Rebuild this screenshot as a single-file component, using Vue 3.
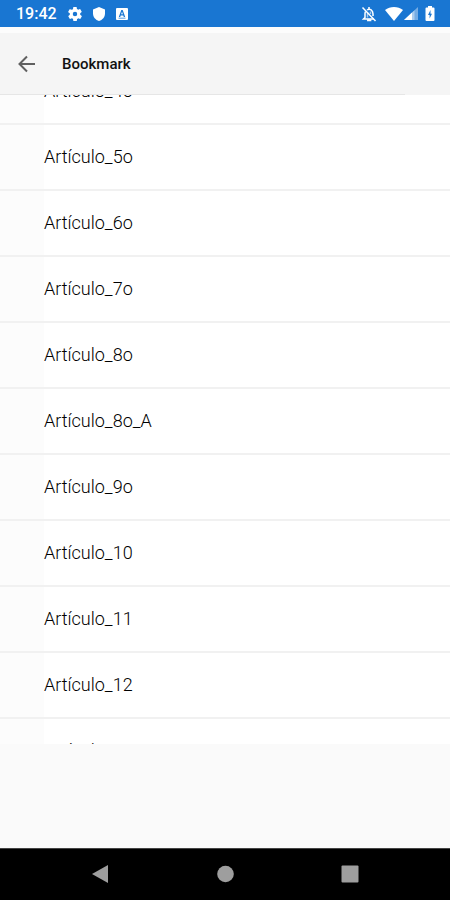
<template>
  <div class="screen">
    <header class="status">
      <span class="time">19:42</span>
      <svg class="icon gear" viewBox="2 2 20 20">
        <path d="M19.400 13a7.500 7.500 0 0 0 0-2l2.100-1.700a.5.5 0 0 0 .1-.6l-2-3.500a.5.5 0 0 0-.6-.2l-2.500 1a7.300 7.300 0 0 0-1.700-1L14.400 2.400A.5.5 0 0 0 14 2h-4a.5.5 0 0 0-.5.400L9.100 5.100a7.700 7.700 0 0 0-1.700 1l-2.500-1a.5.5 0 0 0-.6.2l-2 3.500a.5.5 0 0 0 .1.600L4.600 11a7.900 7.900 0 0 0 0 2l-2.100 1.700a.5.5 0 0 0-.1.600l2 3.500c.1.200.4.300.6.200l2.500-1c.5.400 1.100.7 1.700 1l.4 2.600c0 .2.200.4.500.4h4c.2 0 .4-.2.500-.4l.4-2.600a7.300 7.300 0 0 0 1.700-1l2.500 1c.2.100.5 0 .6-.2l2-3.500a.5.5 0 0 0-.1-.6zM12 15.200a3.200 3.200 0 1 1 0-6.400 3.200 3.200 0 0 1 0 6.400z" />
      </svg>
      <svg class="icon shield" viewBox="0 0 12 14">
        <path d="M6 0 0 2.500V6.500C0 10 2.500 13 6 14c3.500-1 6-4 6-7.500v-4z" />
      </svg>
      <svg class="icon letter" viewBox="0 0 12 12">
        <path fill-rule="evenodd" d="M1 0h10q1 0 1 1v10q0 1-1 1H1q-1 0-1-1V1q0-1 1-1zM5.300 2 2.800 9h1.400l.5-1.500h2.600L7.800 9h1.400L6.700 2zM6 3.700l.9 2.600H5.100zM2.500 9.800v.8h7v-.8z" />
      </svg>
      <span class="space"></span>
      <svg class="bell" viewBox="0 0 16 16">
        <path d="M4.500 5.500C4 6.500 4 7 4 8v3.500L2.500 13H13M6 4c3-2 6 .2 6 4v2M8 1v2" />
        <path d="M6.800 14h2.800v.6H6.800zM1.500 1.500l13 13.500" />
        <path class="tone" d="M6.500 6.500v5M9.500 5.500V8" />
      </svg>
      <svg class="wifi" viewBox="0 0 18 14">
        <path d="M0 3C5-1 13-1 18 3L9 14z" />
      </svg>
      <svg class="signal" viewBox="0 0 14 13">
        <path opacity=".4" d="M14 0v13H0z" />
        <path d="M8 5.600V13H0z" />
        <path opacity=".4" d="M8 5.600 10.500 3.300V13H8z" />
      </svg>
      <svg class="battery" viewBox="0 0 10 15">
        <path fill-rule="evenodd" d="M3 0h4v1.500h1.500q1 0 1 1V14q0 1-1 1h-7q-1 0-1-1V2.500q0-1 1-1H3zM5.500 4 3 9h1.600v3.500L7 7.700H5.500z" />
      </svg>
    </header>
    <div class="toolbar">
      <button class="back" type="button" aria-label="Back">
        <svg viewBox="0 0 18 18">
          <path d="M17 9H2M9 1.500 1.500 9 9 16.500" />
        </svg>
      </button>
      <h1 class="title" v-text="title"></h1>
    </div>
    <ul ref="listRef" class="list">
      <li class="row" v-for="item in items" :key="item" v-text="item"></li>
    </ul>
    <div class="footer"></div>
    <nav class="nav">
      <button type="button" aria-label="Back">
        <svg viewBox="0 0 18 18"><path d="M17 0v18L1 9z" /></svg>
      </button>
      <button type="button" aria-label="Home">
        <svg viewBox="0 0 18 18"><circle cx="9.500" cy="9" r="8.300" /></svg>
      </button>
      <button type="button" aria-label="Recent">
        <svg viewBox="0 0 18 18"><rect x=".5" y=".5" width="17" height="17" rx="1" /></svg>
      </button>
    </nav>
  </div>
</template>

<script setup>
import { onMounted, ref } from 'vue';

const title = ref('Bookmark');
const items = ref([
  'Artículo_4o',
  'Artículo_5o',
  'Artículo_6o',
  'Artículo_7o',
  'Artículo_8o',
  'Artículo_8o_A',
  'Artículo_9o',
  'Artículo_10',
  'Artículo_11',
  'Artículo_12',
  'Artículo_13'
]);

// initial scroll position
const listRef = ref(null);
onMounted(() => {
  listRef.value.scrollTop = 36;
});
</script>

<style>
body {
  margin: 0;
}
</style>

<style scoped>
.screen {
  display: flex;
  flex-direction: column;
  height: 100vh;
  background: #fafafa;
  font-family: Roboto, "Liberation Sans", sans-serif;
}

.status {
  display: flex;
  align-items: center;
  flex: none;
  height: 27px;
  padding: 0 15px 0 16px;
  color: #fff;
  background: #1976d2;
}

.status svg {
  flex: none;
  fill: currentColor;
}

.time {
  font-size: 16px;
  font-weight: 500;
}

.icon {
  margin-left: 11px;
}

.gear {
  width: 14px;
  height: 14px;
}

.shield {
  width: 12px;
  height: 14px;
}

.letter {
  width: 12px;
  height: 12px;
}

.status .bell {
  width: 16px;
  height: 16px;
  margin-right: 8px;
  fill: none;
  stroke: currentColor;
  stroke-width: 1.5;
}

.tone {
  opacity: 0.6;
}

.space {
  flex: 1;
}

.wifi {
  width: 18px;
  height: 14px;
}

.signal {
  width: 14px;
  height: 13px;
  margin-left: 1px;
}

.battery {
  width: 10px;
  height: 15px;
  margin-left: 7px;
}

.toolbar {
  display: flex;
  align-items: center;
  flex: none;
  height: 62px;
  padding: 0 18px;
  background: linear-gradient(#e6e6e6, #e6e6e6) 0 100% / 90% 1px no-repeat, #f5f5f5;
  border-top: 6px solid #fcfcfc;
}

.back {
  width: 18px;
  height: 18px;
  padding: 0;
  border: 0;
  background: none;
  cursor: pointer;
}

.back svg {
  display: block;
  fill: none;
  stroke: #606060;
  stroke-width: 2;
}

.title {
  margin: 0 0 0 26px;
  color: #111;
  font-size: 15px;
  font-weight: 500;
}

.list {
  flex: 1;
  min-height: 0;
  margin: 0;
  padding: 0;
  overflow-y: auto;
  scrollbar-width: none;
  list-style: none;
}

.row {
  box-sizing: border-box;
  height: 66px;
  padding-left: 44px;
  border-bottom: 2px solid #f1f1f1;
  color: #000;
  background: linear-gradient(to right, #fcfcfc 44px, #fff 44px);
  font-size: 18px;
  font-weight: 300;
  line-height: 63px;
}

.footer {
  flex: none;
  height: 104px;
}

.nav {
  display: flex;
  align-items: center;
  justify-content: space-between;
  box-sizing: border-box;
  flex: none;
  height: 52px;
  padding: 0 91px 1px;
  border-top: 1px solid #444;
  background: #000;
}

.nav button {
  width: 18px;
  height: 18px;
  padding: 0;
  border: 0;
  background: none;
}

.nav svg {
  display: block;
  fill: #9e9e9e;
}
</style>
